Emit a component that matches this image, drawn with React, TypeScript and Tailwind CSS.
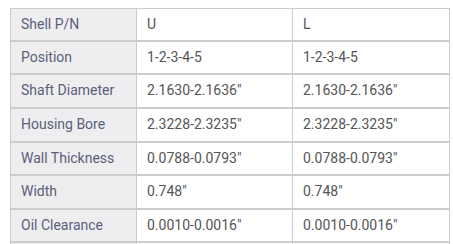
const rows = [
  { label: "Shell P/N", u: "U", l: "L", h: "h-[32px]" },
  { label: "Position", u: "1-2-3-4-5", l: "1-2-3-4-5", h: "h-[33px]" },
  { label: "Shaft Diameter", u: '2.1630-2.1636"', l: '2.1630-2.1636"', h: "h-[34px]" },
  { label: "Housing Bore", u: '2.3228-2.3235"', l: '2.3228-2.3235"', h: "h-[34px]" },
  { label: "Wall Thickness", u: '0.0788-0.0793"', l: '0.0788-0.0793"', h: "h-[33px]" },
  { label: "Width", u: '0.748"', l: '0.748"', h: "h-[34px]" },
  { label: "Oil Clearance", u: '0.0010-0.0016"', l: '0.0010-0.0016"', h: "h-[33px]" },
  { label: "", u: "", l: "", h: "h-[33px]" },
];

export default function App() {
  return (
    <div className="w-[453px] h-[244px] overflow-hidden bg-white pt-2 pl-[10px] font-['Roboto',sans-serif] text-[14px]">
      <table className="w-[439px] border-collapse table-fixed border border-[#cccccc]">
        <colgroup>
          <col className="w-[126px]" />
          <col className="w-[156px]" />
          <col className="w-[157px]" />
        </colgroup>
        <tbody>
          {rows.map((r, i) => (
            <tr key={i} className="border-b-2 border-[#cccccc]">
              <td className={`${r.h} px-[10px] py-0 bg-[#eeeef0] text-[#5a6079] border-r border-[#cccccc] align-middle`}>
                {r.label}
              </td>
              <td className={`${r.h} px-[10px] py-0 text-[#555555] border-r border-[#cccccc] align-middle`}>
                {r.u}
              </td>
              <td className={`${r.h} px-[10px] py-0 text-[#555555] align-middle`}>
                {r.l}
              </td>
            </tr>
          ))}
        </tbody>
      </table>
    </div>
  );
}
